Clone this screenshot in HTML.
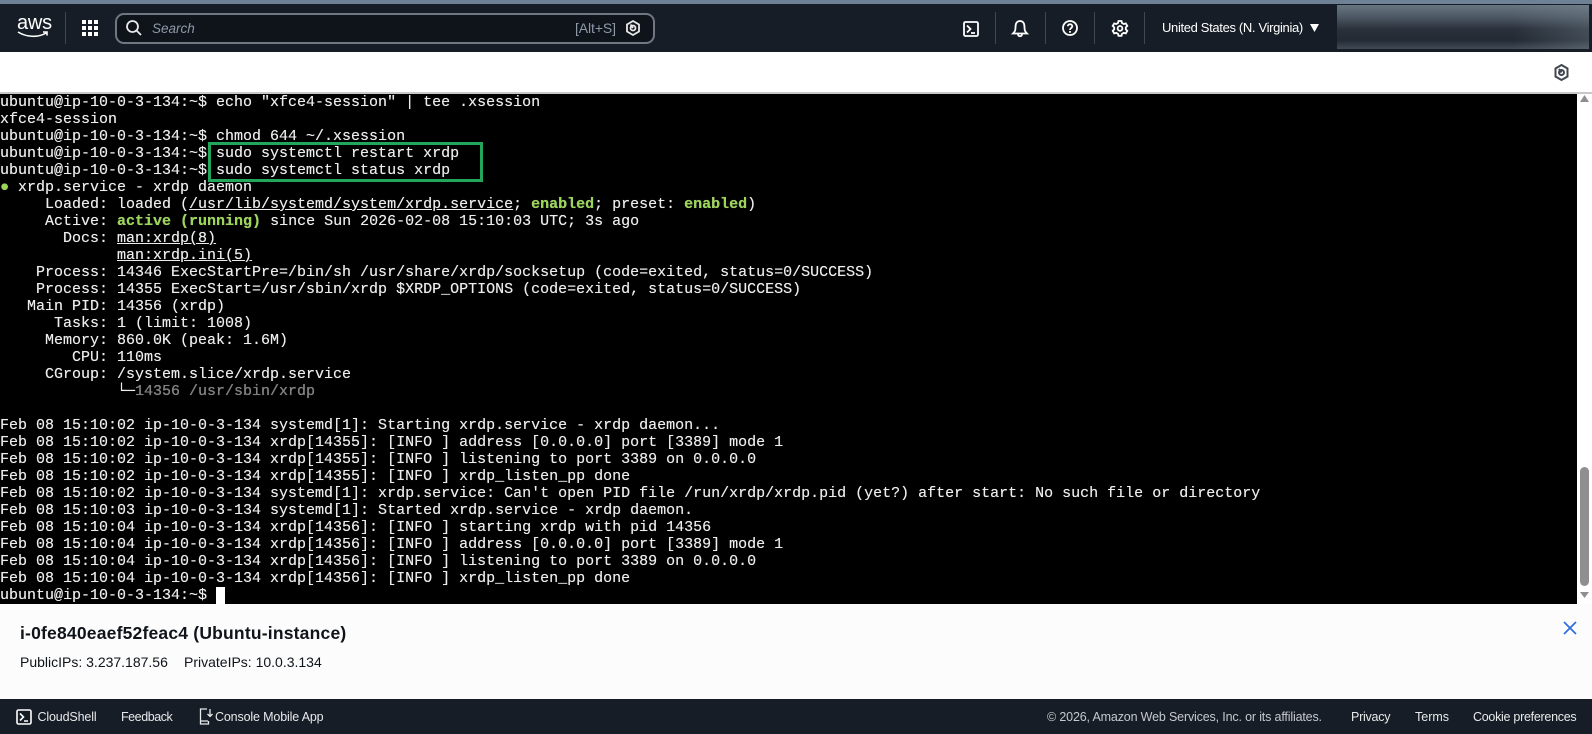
<!DOCTYPE html>
<html><head><meta charset="utf-8">
<style>
html,body{margin:0;padding:0;width:1592px;height:734px;overflow:hidden;background:#fff}
body{position:relative;font-family:"Liberation Sans",sans-serif}
.a{position:absolute;white-space:pre}
.sep{position:absolute;width:1px;background:#414750;top:12px;height:32px}
#term{position:absolute;left:0;top:94px;width:1577px;height:510px;background:#000;overflow:hidden;font:15px/17px "Liberation Mono",monospace;color:#ececec;white-space:pre;font-weight:400;text-shadow:0 0 .4px #ececec}
#term .g{color:#9ad654;font-weight:700}
#term .gr{color:#7d7d7d}
#term .u{text-decoration:underline}
.f{position:absolute;top:708px;font-size:12.5px;line-height:18px;color:#e8e9ea;white-space:pre}
svg{position:absolute;overflow:visible}
</style></head><body>
<div class="a" style="left:0;top:0;width:1592px;height:4px;background:#6f8194"></div>
<div class="a" style="left:0;top:4px;width:1592px;height:48px;background:#161d26"></div>
<div class="a" style="left:17px;top:11px;font-size:20px;line-height:24px;color:#fff;letter-spacing:-.2px">aws</div>
<svg style="left:17px;top:31px" width="32" height="8" fill="none" stroke="#fff" stroke-width="1.6"><path d="M1 1C9 6 21 7 29 2M26 1h4v3.500"/></svg>
<div class="sep" style="left:65px"></div>
<svg style="left:82px;top:20px" width="16" height="16" fill="#fff"><path d="M0 0h4v4H0zM6 0h4v4H6zM12 0h4v4h-4zM0 6h4v4H0zM6 6h4v4H6zM12 6h4v4h-4zM0 12h4v4H0zM6 12h4v4H6zM12 12h4v4h-4z"/></svg>
<div class="a" style="left:115px;top:13px;width:536px;height:27px;border:2px solid #717780;border-radius:9px;background:#0f141a"></div>
<svg style="left:126px;top:20px" width="16" height="16" fill="none" stroke="#e8e9ea" stroke-width="1.800"><circle cx="6.500" cy="6.500" r="5.500"/><path d="M10.500 10.500L15 15"/></svg>
<div class="a" style="left:152px;top:20px;font-size:13.500px;line-height:18px;font-style:italic;color:#8d99a8">Search</div>
<div class="a" style="left:575px;top:19px;font-size:14px;line-height:18px;color:#8d99a8;letter-spacing:-.1px">[Alt+S]</div>
<svg style="left:626px;top:20px" width="14" height="16" fill="none" stroke="#e8e9ea" stroke-width="1.800"><path d="M7 1l6 3.500v7L7 15l-6-3.500v-7z"/><circle cx="7" cy="8" r="2.500"/><path d="M4.500 4.500L7 8"/></svg>

<svg style="left:963px;top:21px" width="16" height="16" fill="none" stroke="#fff" stroke-width="1.800"><rect x="1" y="1" width="14" height="14" rx="1.500"/><path d="M4 4.500L7.500 8 4 11.500M8 12h4"/></svg>
<div class="sep" style="left:995px"></div>
<svg style="left:1012px;top:20px" width="16" height="18" fill="none" stroke="#fff" stroke-width="1.800"><path d="M1 13.500h14c-2-2-2.500-3-2.500-6.500C12.500 3.500 11 1 8 1S3.500 3.500 3.500 7C3.500 10.500 3 11.500 1 13.500zM6 14c0 3 4 3 4 0"/></svg>
<div class="sep" style="left:1045px"></div>
<svg style="left:1062px;top:20px" width="16" height="16" fill="none" stroke="#fff" stroke-width="1.800"><circle cx="8" cy="8" r="7"/><path d="M5.800 6.300C5.800 3.600 10.300 3.600 10.300 6.300 10.300 8 8 8 8 10M8 11v1.800"/></svg>
<div class="sep" style="left:1094px"></div>
<svg style="left:1112px;top:20px" width="16" height="16" fill="none" stroke="#fff" stroke-width="1.800"><path d="M6.500 1h3l.5 2 1.800 1 2-.6 1.500 2.600-1.500 1.400v2l1.500 1.400-1.500 2.600-2-.6-1.800 1-.5 2h-3l-.5-2-1.800-1-2 .6L.7 10.800 2.200 9.400v-2L.7 6l1.500-2.600 2 .6L6 3z"/><circle cx="8" cy="8.400" r="2.400"/></svg>
<div class="sep" style="left:1144px"></div>
<div class="a" style="left:1162px;top:19px;font-size:13px;line-height:18px;color:#fff;letter-spacing:-.34px">United States (N. Virginia)</div>
<svg style="left:1310px;top:24px" width="9" height="8" fill="#fff"><path d="M0 0h9L4.500 8z"/></svg>
<div class="a" style="left:1337px;top:5px;width:252px;height:44px;background:linear-gradient(90deg,rgba(120,135,145,0) 70%,rgba(120,135,145,.35) 100%),linear-gradient(180deg,#687682 0,#4f5b67 25%,#2a313b 55%,#232a34 80%,#414b56 100%)"></div>

<div class="a" style="left:0;top:92px;width:1592px;height:2px;background:#c8c8c8"></div>
<svg style="left:1554px;top:64px" width="15" height="17" fill="none" stroke="#414750" stroke-width="2"><path d="M7.500 1l6 3.500v8l-6 3.500-6-3.500v-8z"/><circle cx="7.500" cy="8.500" r="2.500"/><path d="M5 5l2.500 3.500"/></svg>

<div id="term">ubuntu@ip-10-0-3-134:~$ echo "xfce4-session" | tee .xsession
xfce4-session
ubuntu@ip-10-0-3-134:~$ chmod 644 ~/.xsession
ubuntu@ip-10-0-3-134:~$ sudo systemctl restart xrdp
ubuntu@ip-10-0-3-134:~$ sudo systemctl status xrdp
<span class="g">●</span> xrdp.service - xrdp daemon
     Loaded: loaded (<span class="u">/usr/lib/systemd/system/xrdp.service</span>; <span class="g">enabled</span>; preset: <span class="g">enabled</span>)
     Active: <span class="g">active (running)</span> since Sun 2026-02-08 15:10:03 UTC; 3s ago
       Docs: <span class="u">man:xrdp(8)</span>
             <span class="u">man:xrdp.ini(5)</span>
    Process: 14346 ExecStartPre=/bin/sh /usr/share/xrdp/socksetup (code=exited, status=0/SUCCESS)
    Process: 14355 ExecStart=/usr/sbin/xrdp $XRDP_OPTIONS (code=exited, status=0/SUCCESS)
   Main PID: 14356 (xrdp)
      Tasks: 1 (limit: 1008)
     Memory: 860.0K (peak: 1.6M)
        CPU: 110ms
     CGroup: /system.slice/xrdp.service
             └─<span class="gr">14356 /usr/sbin/xrdp</span>

Feb 08 15:10:02 ip-10-0-3-134 systemd[1]: Starting xrdp.service - xrdp daemon...
Feb 08 15:10:02 ip-10-0-3-134 xrdp[14355]: [INFO ] address [0.0.0.0] port [3389] mode 1
Feb 08 15:10:02 ip-10-0-3-134 xrdp[14355]: [INFO ] listening to port 3389 on 0.0.0.0
Feb 08 15:10:02 ip-10-0-3-134 xrdp[14355]: [INFO ] xrdp_listen_pp done
Feb 08 15:10:02 ip-10-0-3-134 systemd[1]: xrdp.service: Can't open PID file /run/xrdp/xrdp.pid (yet?) after start: No such file or directory
Feb 08 15:10:03 ip-10-0-3-134 systemd[1]: Started xrdp.service - xrdp daemon.
Feb 08 15:10:04 ip-10-0-3-134 xrdp[14356]: [INFO ] starting xrdp with pid 14356
Feb 08 15:10:04 ip-10-0-3-134 xrdp[14356]: [INFO ] address [0.0.0.0] port [3389] mode 1
Feb 08 15:10:04 ip-10-0-3-134 xrdp[14356]: [INFO ] listening to port 3389 on 0.0.0.0
Feb 08 15:10:04 ip-10-0-3-134 xrdp[14356]: [INFO ] xrdp_listen_pp done
ubuntu@ip-10-0-3-134:~$ <span style="display:inline-block;width:9px;height:17px;background:#fff;vertical-align:top"></span></div>
<div class="a" style="left:208px;top:142px;width:269px;height:34px;border:3px solid #23a659"></div>

<svg style="left:1580px;top:95px" width="9" height="7" fill="#8f8f8f"><path d="M4.500 0L9 7H0z"/></svg>
<div class="a" style="left:1580px;top:467px;width:9px;height:119px;background:#8f8f8f;border-radius:5px"></div>
<svg style="left:1580px;top:592px" width="9" height="6" fill="#8f8f8f"><path d="M0 0h9L4.500 6z"/></svg>

<div class="a" style="left:0;top:604px;width:1592px;height:95px;background:#fcfcfc"></div>
<div class="a" style="left:20px;top:622px;font-size:17.500px;line-height:22px;font-weight:700;color:#0f141a;letter-spacing:.2px">i-0fe840eaef52feac4 (Ubuntu-instance)</div>
<div class="a" style="left:20px;top:653px;font-size:14px;line-height:18px;color:#0f141a">PublicIPs: 3.237.187.56</div>
<div class="a" style="left:184px;top:653px;font-size:14px;line-height:18px;color:#0f141a">PrivateIPs: 10.0.3.134</div>
<svg style="left:1563px;top:621px" width="14" height="14" fill="none" stroke="#2f6fe0" stroke-width="1.800"><path d="M1 1l12 12M13 1L1 13"/></svg>

<div class="a" style="left:0;top:699px;width:1592px;height:35px;background:#161d26"></div>
<svg style="left:16px;top:709px" width="16" height="16" fill="none" stroke="#fff" stroke-width="1.600"><rect x="1" y="1" width="14" height="14" rx="1.500"/><path d="M4 4.500L7.500 8 4 11.500M8 12h4"/></svg>
<div class="f" style="left:37.500px;letter-spacing:-.15px">CloudShell</div>
<div class="f" style="left:121px;letter-spacing:-.45px">Feedback</div>
<svg style="left:199px;top:708px" width="14" height="17" fill="none" stroke="#e8e9ea" stroke-width="1.300"><path d="M8 1H1.500v15H9.500v-3M1.500 13H9M11 1v7M8.500 6l2.500 2.500L13.500 6"/></svg>
<div class="f" style="left:215px;letter-spacing:-.15px">Console Mobile App</div>
<div class="f" style="left:1047px;color:#c6c9cd;letter-spacing:-.16px">© 2026, Amazon Web Services, Inc. or its affiliates.</div>
<div class="f" style="left:1351px;letter-spacing:-.25px">Privacy</div>
<div class="f" style="left:1415px">Terms</div>
<div class="f" style="left:1473px;letter-spacing:-.28px">Cookie preferences</div>
</body></html>
